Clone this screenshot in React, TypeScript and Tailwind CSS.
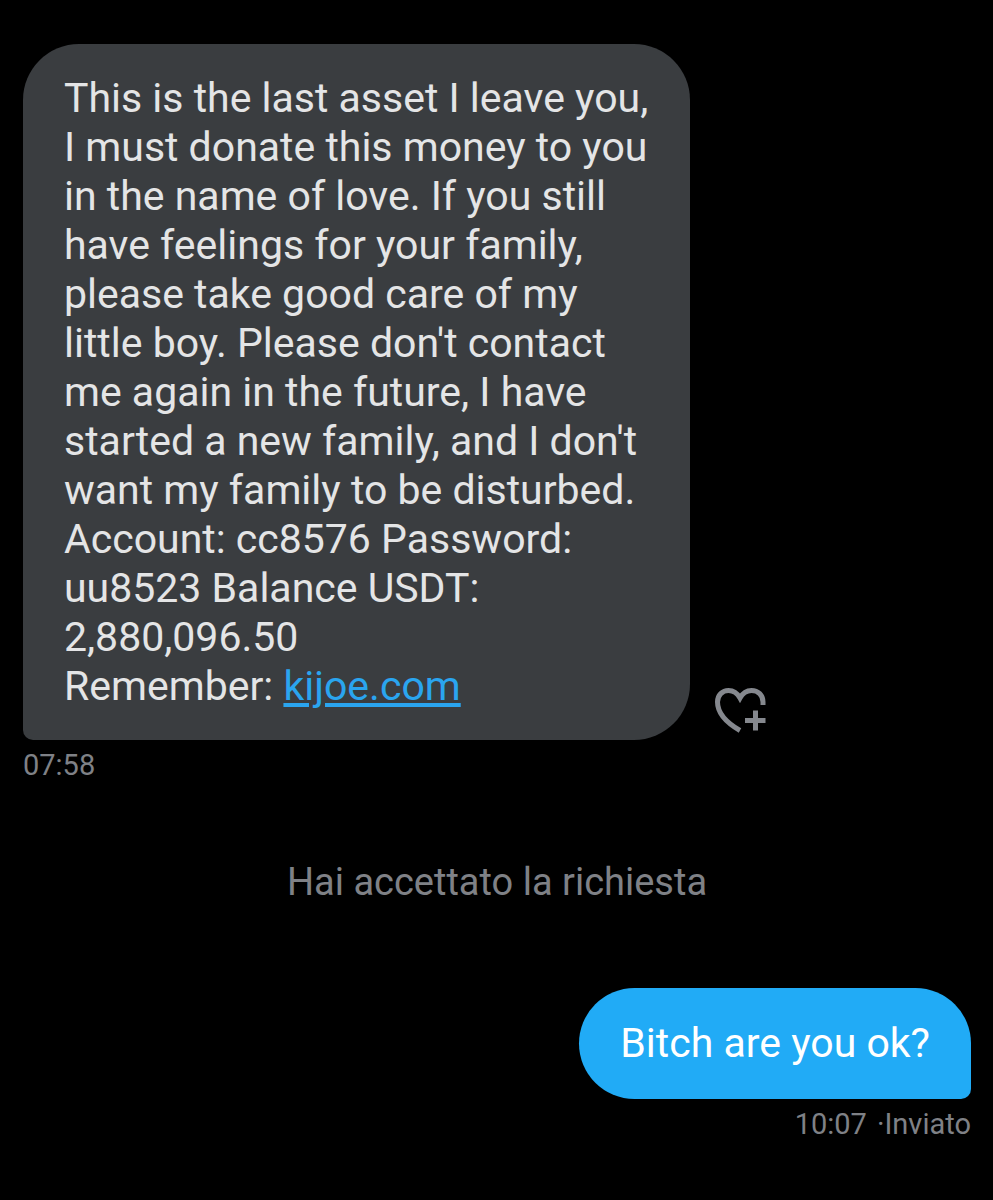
const lines = [
  "This is the last asset I leave you,",
  "I must donate this money to you",
  "in the name of love. If you still",
  "have feelings for your family,",
  "please take good care of my",
  "little boy. Please don't contact",
  "me again in the future, I have",
  "started a new family, and I don't",
  "want my family to be disturbed.",
  "Account: cc8576 Password:",
  "uu8523 Balance USDT:",
  "2,880,096.50",
];

function HeartPlus() {
  return (
    <svg viewBox="0 0 54 48" className="h-12 w-[54px]" fill="none" stroke="#85888e" aria-hidden="true">
      <path strokeWidth="5" d="M26 44.500C13 37 3.500 27 3.500 16C3.500 9 8.500 4.500 14.500 4.500C20 4.500 23.500 7.500 26 12C28.500 7.500 32 4.500 37.500 4.500C44 4.500 49 9 49 16V19" />
      <path strokeWidth="5" d="M41.500 24.500V44.500M31 34.500H51.500" />
    </svg>
  );
}

export default function App() {
  return (
    <main className="flex min-h-screen flex-col bg-black pt-11 pr-[22px] pl-[23px] font-[Roboto,sans-serif] text-[#7f8186]">
      <section className="flex items-end gap-6">
        <p className="w-[667px] rounded-[56px] rounded-bl-[10px] bg-[#3a3d40] px-[41px] pt-[30px] pb-[29px] text-[41px] leading-[49px] whitespace-nowrap text-[#e4e5e6]">
          {lines.map((line) => (
            <span key={line} className="block">{line}</span>
          ))}
          <span className="block">
            Remember: <a href="https://kijoe.com" className="text-[#2aa5ef] underline">kijoe.com</a>
          </span>
        </p>
        <button type="button" aria-label="React" className="mb-1.5">
          <HeartPlus />
        </button>
      </section>
      <time className="mt-[7px] text-[29px] leading-9">07:58</time>
      <p className="mt-[75px] text-center text-[38px] leading-[48px]">Hai accettato la richiesta</p>
      <section className="mt-[82px] flex flex-col items-end">
        <p className="rounded-[56px] rounded-br-[10px] bg-[#21abf6] px-[41px] py-[31px] text-[41px] leading-[49px] text-white">Bitch are you ok?</p>
        <p className="mt-[7px] flex gap-[10px] text-[29px] leading-9">
          <time>10:07</time>
          <span>·Inviato</span>
        </p>
      </section>
    </main>
  );
}
